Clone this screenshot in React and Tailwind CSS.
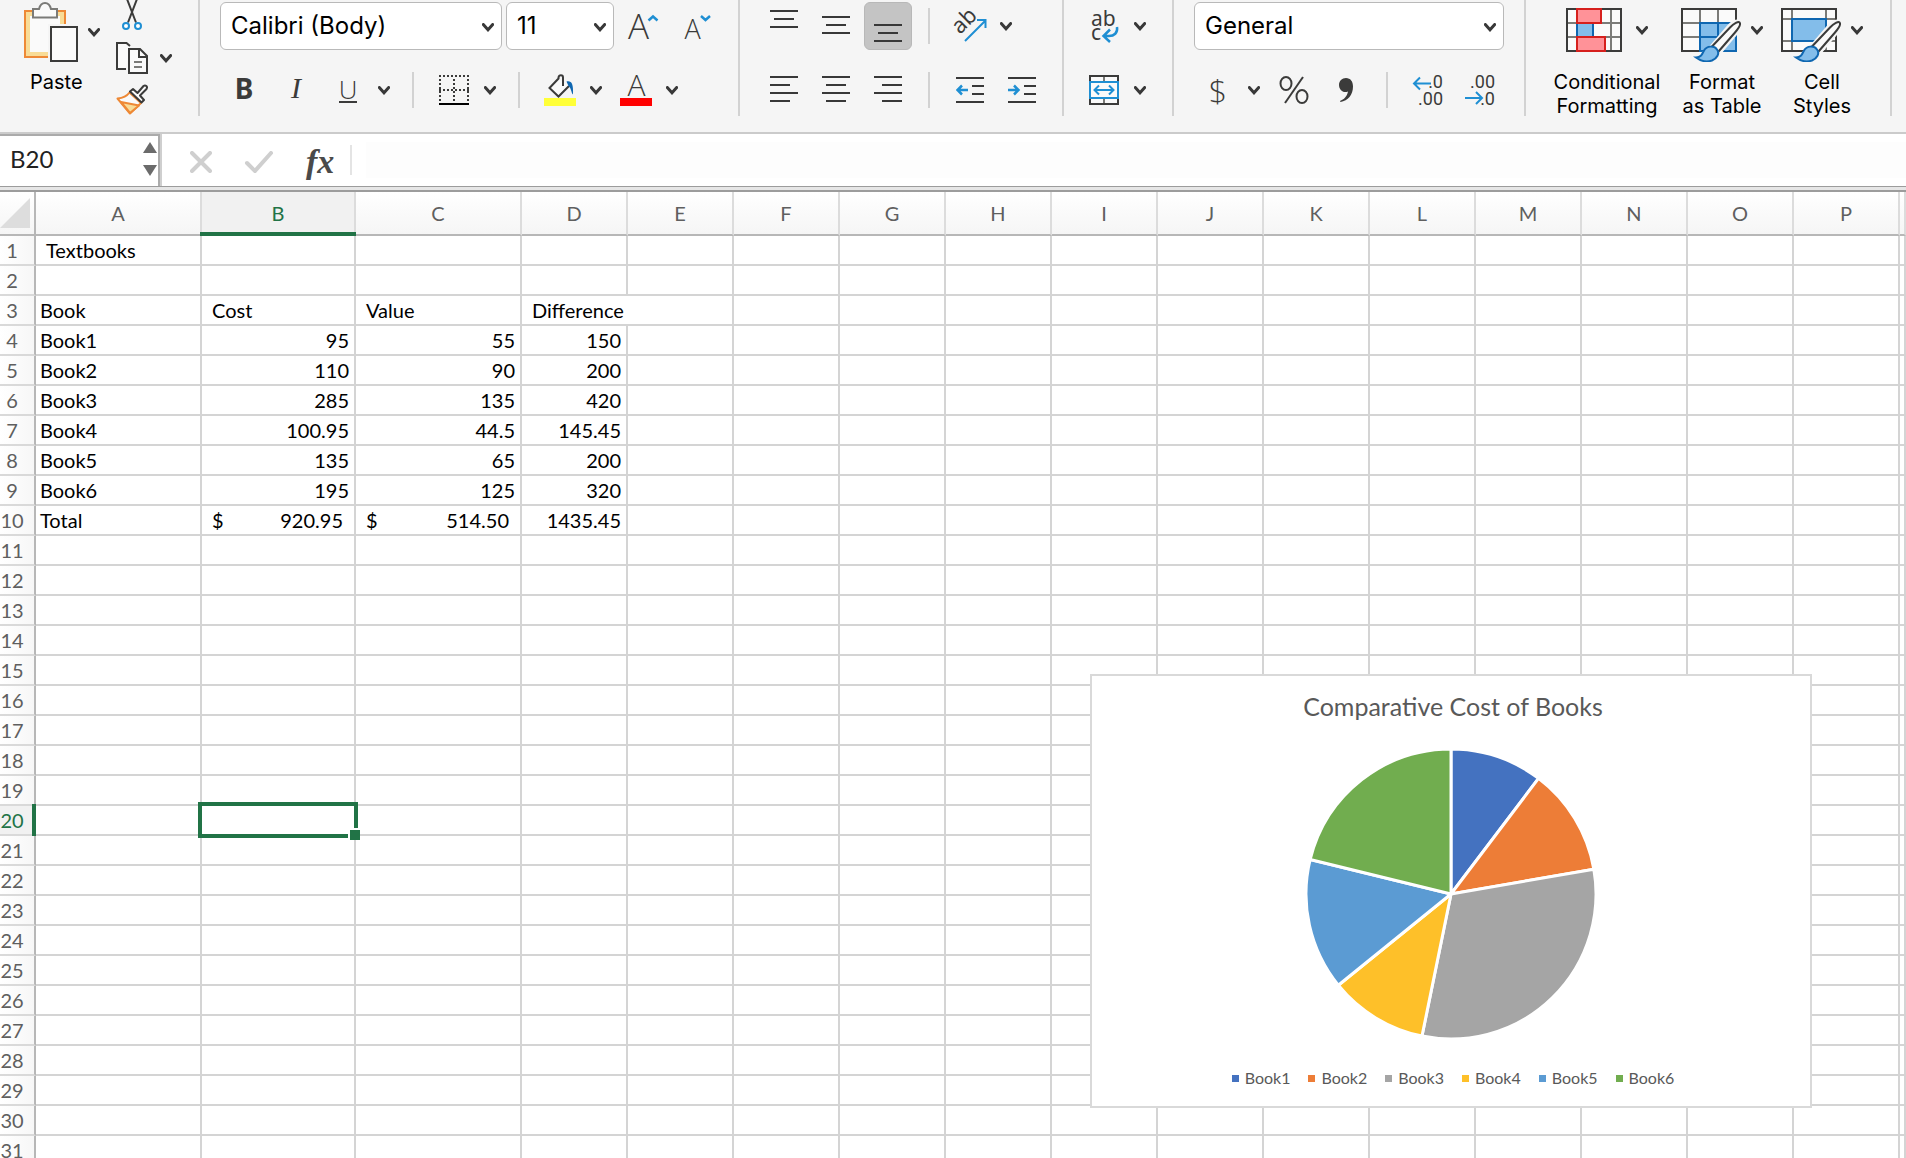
import React, { useState } from "react";

const COLUMNS = ["A", "B", "C", "D", "E", "F", "G", "H", "I", "J", "K", "L", "M", "N", "O", "P", ""];
const ROW_COUNT = 31;

const CELLS = {
    A1: { text: "Textbooks", className: "pl-2.5" },
    A3: { text: "Book" },
    B3: { text: "Cost", className: "pl-2.5" },
    C3: { text: "Value", className: "pl-2.5" },
    D3: { text: "Difference", className: "pl-2.5" },
    A4: { text: "Book1" }, B4: { text: "95" }, C4: { text: "55" }, D4: { text: "150" },
    A5: { text: "Book2" }, B5: { text: "110" }, C5: { text: "90" }, D5: { text: "200" },
    A6: { text: "Book3" }, B6: { text: "285" }, C6: { text: "135" }, D6: { text: "420" },
    A7: { text: "Book4" }, B7: { text: "100.95" }, C7: { text: "44.5" }, D7: { text: "145.45" },
    A8: { text: "Book5" }, B8: { text: "135" }, C8: { text: "65" }, D8: { text: "200" },
    A9: { text: "Book6" }, B9: { text: "195" }, C9: { text: "125" }, D9: { text: "320" },
    A10: { text: "Total" },
    B10: { text: "920.95", currency: true },
    C10: { text: "514.50", currency: true },
    D10: { text: "1435.45" },
};

const SLICES = [
    { name: "Book1", value: 95, fill: "#4472c0" },
    { name: "Book2", value: 110, fill: "#ed7d37" },
    { name: "Book3", value: 285, fill: "#a5a5a5" },
    { name: "Book4", value: 100.95, fill: "#fec029" },
    { name: "Book5", value: 135, fill: "#5b9bd3" },
    { name: "Book6", value: 195, fill: "#71ad4f" },
];

const Chevron = () => (
    <svg width="12" height="9" viewBox="0 0 12 9" fill="none" stroke="#383838" strokeWidth="3" aria-hidden="true">
        <path d="M1.3 1.5L6 6.8L10.7 1.5" strokeLinecap="round" />
    </svg>
);

const Divider = () => <div className="mx-4 h-9 w-0.5 bg-[#d2d2d2]" />;

const GroupDivider = () => <div className="h-[116px] w-0.5 shrink-0 bg-[#d2d2d2]" />;

const ToolButton = ({ label, pressed = false, children }) => (
    <button
        type="button"
        aria-label={label}
        aria-pressed={pressed}
        className={
            pressed
                ? "flex size-12 shrink-0 items-center justify-center rounded-md border border-[#b8b8b8] bg-[#c4c4c4]"
                : "flex size-12 shrink-0 items-center justify-center"
        }
    >
        {children}
    </button>
);

const MenuButton = ({ label }) => (
    <button type="button" aria-label={label} className="flex h-12 w-6 shrink-0 items-center justify-center">
        <Chevron />
    </button>
);

const SelectBox = ({ label, value, className }) => (
    <div className={`relative ${className}`}>
        <select
            aria-label={label}
            defaultValue={value}
            className="h-12 w-full appearance-none rounded-md border border-[#b9b9b9] bg-white pl-2.5 font-['Inter'] text-2xl leading-7 text-black"
        >
            <option>{value}</option>
        </select>
        <span className="pointer-events-none absolute inset-y-0 right-2 flex items-center pt-0.5">
            <Chevron />
        </span>
    </div>
);

// each line is [x1, x2, y] inside a 28px box
const Lines = ({ rows }) => (
    <svg width="28" height="34" viewBox="0 0 28 34" stroke="#383838" strokeWidth="2" aria-hidden="true">
        {rows.map(([x1, x2, y]) => (
            <line key={y} x1={x1} x2={x2} y1={y} y2={y} />
        ))}
    </svg>
);

const PasteIcon = () => (
    <svg width="54" height="60" viewBox="0 0 54 60" fill="none" strokeWidth="2" aria-hidden="true">
        <path d="M0 8h42v14h-16v34H0z" fill="#f8dc97" />
        <path d="M6 14h30v10H24v26H6z" fill="#fafafa" />
        <path d="M24 55H1V9h40v13" stroke="#ee8936" />
        <path d="M9 15.500V7h6c1-4 3-6 6-6s5 2 6 6h6v8.500z" fill="#fafafa" stroke="#7b7b78" />
        <rect x="24" y="22" width="30" height="38" fill="#f5f5f5" />
        <rect x="27" y="25" width="26" height="34" fill="#fafafa" stroke="#3b3b3a" />
    </svg>
);

const CutIcon = () => (
    <svg width="20" height="32" viewBox="0 0 20 32" fill="none" strokeWidth="2" aria-hidden="true">
        <path d="M5 -1L14 22.500M15 -1L6 22.500" stroke="#3b3b3a" />
        <circle cx="4" cy="26" r="3" fill="#fff" stroke="#1f8fd3" />
        <circle cx="16" cy="26" r="3" fill="#fff" stroke="#1f8fd3" />
    </svg>
);

const CopyIcon = () => (
    <svg width="32" height="32" viewBox="0 0 32 32" fill="none" stroke="#3b3b3a" strokeWidth="2" aria-hidden="true">
        <path d="M10 27H1V1h9.500l3.500 3" fill="#fafafa" />
        <path d="M13 7h11l7 7v17H13z" fill="#fafafa" />
        <path d="M23 7v8h8" />
        <path d="M18 20h8M18 25h8" stroke="#7b7b78" />
    </svg>
);

const BrushIcon = () => (
    <svg width="32" height="32" viewBox="0 0 32 32" fill="none" strokeWidth="2" strokeLinejoin="round" aria-hidden="true">
        <path d="M1.500 14.500C7 14 11 12 13.500 8.500L25 19L14 29.500z" fill="#fafafa" stroke="#ee8936" />
        <path d="M5 18L23 21.500L14 29z" fill="#f8dc97" stroke="#ee8936" />
        <path d="M14 7.500L17 5l4.500 4L27.500 2c2-1.500 4.500.5 3 3L24 11.500l4 4.500-2.500 2.500z" fill="#fafafa" stroke="#3b3b3a" />
    </svg>
);

const LetterIcon = ({ size, up }) => (
    <svg width="34" height="34" viewBox="0 0 34 34" fill="none" className="overflow-visible" aria-hidden="true">
        <text
            x={size === "large" ? 13.5 : 15.5}
            y="30"
            textAnchor="middle"
            fontFamily="Open Sans"
            fontSize={size === "large" ? 35 : 27}
            fill="#3b3b3a"
            fontWeight="300"
        >
            A
        </text>
        <path d={up ? "M23.500 11.500L28 7.500L32.500 11.500" : "M24 7L28.500 11L33 7"} stroke="#1f8fd3" strokeWidth="2.500" />
    </svg>
);

const BordersIcon = () => (
    <svg width="30" height="30" viewBox="0 0 30 30" fill="none" stroke="#3b3b3a" strokeWidth="2" aria-hidden="true">
        <path d="M0 1h30M0 15h30" strokeDasharray="2 2" />
        <path d="M1 4v24M15 4v24M29 4v24" strokeDasharray="2 2" />
        <path d="M0 29h30" stroke="#000" />
    </svg>
);

const FillIcon = () => (
    <svg width="32" height="32" viewBox="0 0 32 32" fill="none" strokeWidth="2" aria-hidden="true">
        <path d="M14 4.500L5.500 14L14.500 22.500L25 12.500z" fill="#fafafa" />
        <path d="M19 12V3.500c0-3-4-3-4.500 0v1L5.500 14l9 8.500L25 12" stroke="#3b3b3a" />
        <path d="M22.500 7.500c5-1 7 2 6.500 13c-2-2-1.500-6-4.500-8.500z" fill="#0f67b1" />
        <rect y="24" width="32" height="8" fill="#ffff38" />
    </svg>
);

const FontColorIcon = () => (
    <svg width="32" height="32" viewBox="0 0 32 32" fill="none" className="overflow-visible" aria-hidden="true">
        <text x="16.500" y="22" textAnchor="middle" fontFamily="Open Sans" fontSize="30" fontWeight="300" fill="#3b3b3a">
            A
        </text>
        <rect y="24" width="32" height="8" fill="#ff0000" />
    </svg>
);

const OrientationIcon = () => (
    <svg width="34" height="34" viewBox="0 0 34 34" fill="none" className="overflow-visible" aria-hidden="true">
        <text x="7" y="26" transform="rotate(-45 7 26)" fontFamily="Noto Sans" fontSize="22" fill="#3b3b3a">ab</text>
        <path d="M12 32L32 12M24 11h8.500v8" stroke="#1f8fd3" strokeWidth="2" />
    </svg>
);

const WrapIcon = () => (
    <svg width="30" height="34" viewBox="0 0 30 34" fill="none" className="overflow-visible" aria-hidden="true">
        <text x="2" y="17" fontFamily="Noto Sans" fontSize="21" fill="#3b3b3a">ab</text>
        <text x="2" y="31" fontFamily="Noto Sans" fontSize="21" fill="#3b3b3a">c</text>
        <path d="M28 18c1 6-3 9-8 9h-5M21 20.500L14.500 27L21 33" stroke="#1f8fd3" strokeWidth="2.500" />
    </svg>
);

const MergeIcon = () => (
    <svg width="30" height="30" viewBox="0 0 30 30" fill="none" strokeWidth="2" aria-hidden="true">
        <rect x="1" y="1" width="28" height="28" fill="#fafafa" stroke="#3b3b3a" />
        <path d="M15 2v26" stroke="#7b7b78" />
        <rect x="1" y="7" width="28" height="16" fill="#fafafa" stroke="#1f8fd3" />
        <path d="M5.500 15h19M10 10.500L5.500 15l4.500 4.500M20 10.500l4.500 4.500l-4.500 4.500" stroke="#1f8fd3" />
    </svg>
);

const IndentIcon = ({ outdent }) => (
    <svg width="28" height="26" viewBox="0 0 28 26" fill="none" strokeWidth="2" aria-hidden="true">
        <path d="M0 1h28M16 9h12M16 17h12M0 25h28" stroke="#383838" />
        <path
            d={outdent ? "M1 13h11M6 8.500L1.500 13L6 17.500" : "M0 13h11M6 8.500L10.500 13L6 17.500"}
            stroke="#1f8fd3"
            strokeWidth="2.500"
        />
    </svg>
);

const PercentIcon = () => (
    <svg width="30" height="28" viewBox="0 0 30 28" fill="none" stroke="#3b3b3a" strokeWidth="2" aria-hidden="true">
        <ellipse cx="7" cy="7.500" rx="5.500" ry="6.500" />
        <ellipse cx="23" cy="20.500" rx="5.500" ry="6.500" />
        <path d="M24 1L6 27" />
    </svg>
);

const CommaIcon = () => (
    <svg width="14" height="24" viewBox="0 0 14 24" aria-hidden="true">
        <path d="M7 0c4.500 0 7 3.500 7 8.500C14 17 9 22.500 1.500 24l-.5-1c4-1.500 7-4.500 8-9.500C4 15.500 0 11.500 0 7c0-4 3-7 7-7z" fill="#3b3b3a" />
    </svg>
);

const DecimalIcon = ({ increase }) => (
    <svg width="32" height="34" viewBox="0 0 32 34" fill="none" className="overflow-visible" aria-hidden="true">
        <text x="31" y="15" textAnchor="end" fontFamily="Roboto" fontSize="18" fill="#3b3b3a">
            {increase ? ".0" : ".00"}
        </text>
        <text x="31" y="32" textAnchor="end" fontFamily="Roboto" fontSize="18" fill="#3b3b3a">
            {increase ? ".00" : ".0"}
        </text>
        <path
            d={increase ? "M2 10.500h17M8 4.500L2 10.500l6 6" : "M1 25h17M12 19l6 6l-6 6"}
            stroke="#1f8fd3"
            strokeWidth="2"
        />
    </svg>
);

const ConditionalIcon = () => (
    <svg width="60" height="54" viewBox="0 0 60 54" fill="none" strokeWidth="2" aria-hidden="true">
        <rect x="1" y="1" width="54" height="42" fill="#fafafa" />
        <path d="M1 15h54M1 29h54M11 1v42M45 1v42" stroke="#7b7b78" />
        <rect x="1" y="1" width="54" height="42" stroke="#3b3b3a" />
        <rect x="27" y="16" width="17" height="12" fill="#fafafa" />
        <rect x="11" y="15" width="16" height="14" fill="#83bdea" stroke="#0f67b1" />
        <rect x="11" y="1" width="24" height="14" fill="#ff9298" stroke="#d6201d" />
        <rect x="11" y="29" width="28" height="14" fill="#ff9298" stroke="#d6201d" />
    </svg>
);

const PaintBrush = () => (
    <>
        <path d="M27 42L46 20c5-6 10-8 13-6c3 3-1 9-5 13L38 46c-3 8-13 10-24 4z" fill="#f5f5f5" stroke="#f5f5f5" strokeWidth="3" />
        <path d="M31 38.500L49 19.500c4-4 8.500-6.500 9.500-5c1.500 1.500-1 6-4.500 10L37.500 43.500" fill="#fafafa" stroke="#3b3b3a" />
        <path d="M15 49.500c5 0 6-3 8-7c3-5 10-5 13-1c3 4 0 9-5 11c-6 2-12 0-16-3z" fill="#83bdea" stroke="#0f67b1" />
    </>
);

const TableIcon = () => (
    <svg width="60" height="54" viewBox="0 0 60 54" fill="none" strokeWidth="2" aria-hidden="true">
        <rect x="1" y="1" width="54" height="42" fill="#fafafa" />
        <path d="M1 15h54M1 29h18M19 1v42M37 1v14" stroke="#7b7b78" />
        <rect x="1" y="1" width="54" height="42" stroke="#3b3b3a" />
        <path d="M19 15h36v28H19zM37 15v28M19 29h36" fill="#83bdea" stroke="#0f67b1" />
        <PaintBrush />
    </svg>
);

const StylesIcon = () => (
    <svg width="60" height="54" viewBox="0 0 60 54" fill="none" strokeWidth="2" aria-hidden="true">
        <rect x="1" y="1" width="54" height="42" fill="#fafafa" />
        <path d="M1 11h54M1 33h54M11 1v42M45 1v42" stroke="#7b7b78" />
        <rect x="1" y="1" width="54" height="42" stroke="#3b3b3a" />
        <rect x="11" y="11" width="34" height="22" fill="#83bdea" stroke="#0f67b1" />
        <PaintBrush />
    </svg>
);

const BigButton = ({ icon, lines, className }) => (
    <button type="button" className={`flex shrink-0 flex-col items-center gap-2 ${className}`}>
        <span className="flex items-start gap-2.5">
            {icon}
            <span className="pt-[18px]">
                <Chevron />
            </span>
        </span>
        <span className="flex flex-col font-['Inter'] text-[20px] leading-6 whitespace-nowrap text-black">
            {lines.map((line) => (
                <span key={line}>{line}</span>
            ))}
        </span>
    </button>
);

const Ribbon = () => (
    <div className="flex h-[134px] items-start border-b-2 border-[#cbcbcb] bg-[#f5f5f5]" role="toolbar" aria-label="Home">
        <div className="flex gap-4 pr-[26px] pl-6">
            <button type="button" className="flex flex-col items-start gap-2 pt-0.5">
                <span className="flex items-center gap-2.5">
                    <PasteIcon />
                    <Chevron />
                </span>
                <span className="pl-1.5 font-['Inter'] text-[20px] leading-6 text-black">Paste</span>
            </button>
            <div className="flex flex-col gap-2.5">
                <button type="button" aria-label="Cut" className="flex h-8 w-8 justify-center">
                    <CutIcon />
                </button>
                <div className="flex items-center gap-3">
                    <button type="button" aria-label="Copy" className="size-8">
                        <CopyIcon />
                    </button>
                    <button type="button" aria-label="Copy options">
                        <Chevron />
                    </button>
                </div>
                <button type="button" aria-label="Format painter" className="size-8">
                    <BrushIcon />
                </button>
            </div>
        </div>
        <GroupDivider />
        <div className="flex flex-col gap-4 px-5 pt-0.5">
            <div className="flex gap-1">
                <SelectBox label="Font" value="Calibri (Body)" className="w-[282px]" />
                <SelectBox label="Font size" value="11" className="w-[108px]" />
                <ToolButton label="Increase font size">
                    <LetterIcon size="large" up />
                </ToolButton>
                <ToolButton label="Decrease font size">
                    <LetterIcon size="small" />
                </ToolButton>
            </div>
            <div className="flex items-center font-['Noto_Sans'] text-[28px] leading-8 text-[#3b3b3a]">
                <div className="flex gap-1">
                    <ToolButton label="Bold">
                        <span className="pb-1 font-bold">B</span>
                    </ToolButton>
                    <ToolButton label="Italic">
                        <span className="pb-1 font-['Liberation_Serif'] text-[30px] italic">I</span>
                    </ToolButton>
                    <ToolButton label="Underline">
                        <span className="border-b-2 border-[#3b3b3a] font-['Open_Sans'] text-[26px] leading-6 font-light">U</span>
                    </ToolButton>
                </div>
                <MenuButton label="Underline options" />
                <Divider />
                <ToolButton label="Borders">
                    <BordersIcon />
                </ToolButton>
                <MenuButton label="Border options" />
                <Divider />
                <ToolButton label="Fill color">
                    <FillIcon />
                </ToolButton>
                <MenuButton label="Fill color options" />
                <div className="ml-1 flex">
                    <ToolButton label="Font color">
                        <FontColorIcon />
                    </ToolButton>
                    <MenuButton label="Font color options" />
                </div>
            </div>
        </div>
        <GroupDivider />
        <div className="flex flex-col gap-4 pt-0.5 pr-4 pl-5">
            <div className="flex items-center">
                <div className="flex gap-1">
                    <ToolButton label="Top align">
                        <Lines rows={[[0, 28, 2], [4, 24, 10], [0, 28, 18]]} />
                    </ToolButton>
                    <ToolButton label="Middle align">
                        <Lines rows={[[0, 28, 8], [4, 24, 16], [0, 28, 24]]} />
                    </ToolButton>
                    <ToolButton label="Bottom align" pressed>
                        <Lines rows={[[0, 28, 16], [4, 24, 24], [0, 28, 32]]} />
                    </ToolButton>
                </div>
                <Divider />
                <ToolButton label="Orientation">
                    <OrientationIcon />
                </ToolButton>
                <MenuButton label="Orientation options" />
            </div>
            <div className="flex items-center">
                <div className="flex gap-1">
                    <ToolButton label="Align left">
                        <Lines rows={[[0, 28, 4], [0, 20, 12], [0, 28, 20], [0, 20, 28]]} />
                    </ToolButton>
                    <ToolButton label="Center">
                        <Lines rows={[[0, 28, 4], [4, 24, 12], [0, 28, 20], [4, 24, 28]]} />
                    </ToolButton>
                    <ToolButton label="Align right">
                        <Lines rows={[[0, 28, 4], [8, 28, 12], [0, 28, 20], [8, 28, 28]]} />
                    </ToolButton>
                </div>
                <Divider />
                <div className="flex gap-1">
                    <ToolButton label="Decrease indent">
                        <IndentIcon outdent />
                    </ToolButton>
                    <ToolButton label="Increase indent">
                        <IndentIcon />
                    </ToolButton>
                </div>
            </div>
        </div>
        <GroupDivider />
        <div className="flex flex-col gap-4 pt-0.5 pr-5 pl-4">
            <div className="flex">
                <ToolButton label="Wrap text">
                    <WrapIcon />
                </ToolButton>
                <MenuButton label="Wrap text options" />
            </div>
            <div className="flex">
                <ToolButton label="Merge and center">
                    <MergeIcon />
                </ToolButton>
                <MenuButton label="Merge options" />
            </div>
        </div>
        <GroupDivider />
        <div className="flex flex-col gap-4 px-5 pt-0.5">
            <SelectBox label="Number format" value="General" className="w-full" />
            <div className="flex items-center">
                <ToolButton label="Accounting format">
                    <span className="font-['Open_Sans'] text-[32px] leading-8 font-light text-[#3b3b3a]">$</span>
                </ToolButton>
                <MenuButton label="Currency options" />
                <div className="ml-1 flex gap-1">
                    <ToolButton label="Percent style">
                        <PercentIcon />
                    </ToolButton>
                    <ToolButton label="Comma style">
                        <CommaIcon />
                    </ToolButton>
                </div>
                <Divider />
                <div className="flex gap-1">
                    <ToolButton label="Increase decimal">
                        <DecimalIcon increase />
                    </ToolButton>
                    <ToolButton label="Decrease decimal">
                        <DecimalIcon />
                    </ToolButton>
                </div>
            </div>
        </div>
        <GroupDivider />
        <div className="flex gap-4 pt-2 pr-[26px] pl-6">
            <BigButton icon={<ConditionalIcon />} lines={["Conditional", "Formatting"]} className="w-[114px]" />
            <BigButton icon={<TableIcon />} lines={["Format", "as Table"]} className="w-[84px]" />
            <BigButton icon={<StylesIcon />} lines={["Cell", "Styles"]} className="w-[84px]" />
        </div>
        <GroupDivider />
    </div>
);

const FormulaBar = () => {
    const [formula, setFormula] = useState("");

    return (
        <div className="flex h-[52px] items-stretch bg-white">
            <div className="flex w-[162px] shrink-0 border-r-2 border-[#cfcfcf]">
                <div className="flex w-full items-center border-t-2 border-r-2 border-[#ababab] pb-1">
                    <input
                        aria-label="Name box"
                        defaultValue="B20"
                        className="w-0 flex-1 pl-2.5 text-2xl text-[#222] outline-none"
                    />
                    <div className="flex flex-col gap-3 pr-px">
                        <button type="button" aria-label="Previous name">
                            <svg width="14" height="11" viewBox="0 0 14 11" fill="#6b6b6b">
                                <path d="M7 0l7 11H0z" />
                            </svg>
                        </button>
                        <button type="button" aria-label="Next name">
                            <svg width="14" height="11" viewBox="0 0 14 11" fill="#6b6b6b">
                                <path d="M7 11l7-11H0z" />
                            </svg>
                        </button>
                    </div>
                </div>
            </div>
            <div className="flex items-center pt-1 pl-7">
                <button type="button" aria-label="Cancel">
                    <svg width="22" height="22" viewBox="0 0 22 22" stroke="#cfcfcf" strokeWidth="4" strokeLinecap="round">
                        <path d="M2 2l18 18M20 2L2 20" />
                    </svg>
                </button>
                <button type="button" aria-label="Enter" className="ml-8">
                    <svg width="30" height="22" viewBox="0 0 30 22" fill="none" stroke="#cfcfcf" strokeWidth="4" strokeLinecap="round">
                        <path d="M3 12l8 8L27 2" />
                    </svg>
                </button>
                <button
                    type="button"
                    aria-label="Insert function"
                    className="ml-8 font-['Liberation_Serif'] text-[34px] leading-9 font-bold text-[#4a4a4a] italic"
                >
                    fx
                </button>
            </div>
            <div className="ml-4 h-[30px] w-0.5 self-center bg-[#e4e4e4]" />
            <input
                aria-label="Formula"
                value={formula}
                onChange={(e) => setFormula(e.target.value)}
                className="my-2 ml-3.5 flex-1 bg-[#fdfdfd] px-2 text-xl outline-none"
            />
        </div>
    );
};

const Selection = () => (
    <div className="pointer-events-none absolute -top-1 -right-1 -bottom-1 -left-1 z-10 border-4 border-[#217346]">
        <div className="absolute -right-1.5 -bottom-1.5 size-3 border-t-2 border-l-2 border-white bg-[#217346]" />
    </div>
);

const Cell = ({ id, column, row }) => {
    const cell = CELLS[id];
    const numeric = cell && /^\d/.test(cell.text);
    const borders = id === "D3" ? "border-b-2" : "border-r-2 border-b-2";

    if (column === "B" && row === 20) {
        return (
            <td className="relative h-[30px] border-r-2 border-b-2 border-[#d4d4d4] p-0">
                <Selection />
            </td>
        );
    }
    if (!cell) return <td className={`h-[30px] border-[#d4d4d4] p-0 ${borders}`} />;
    if (cell.currency) {
        return (
            <td className={`h-[30px] border-[#d4d4d4] p-0 pr-[11px] pl-2.5 ${borders}`}>
                <div className="flex justify-between">
                    <span>$</span>
                    <span>{cell.text}</span>
                </div>
            </td>
        );
    }
    return (
        <td
            className={`h-[30px] border-[#d4d4d4] py-0 pr-[5px] whitespace-nowrap ${borders} ${numeric ? "text-right" : "text-left"} ${cell.className || "pl-1"}`}
        >
            {cell.text}
        </td>
    );
};

const Sheet = () => (
    <table className="w-full table-fixed border-separate border-spacing-0 text-[20px] leading-7 text-black">
        <colgroup>
            <col className="w-9" />
            <col className="w-[166px]" />
            <col className="w-[154px]" />
            <col className="w-[166px]" />
            {COLUMNS.slice(3, -1).map((name) => (
                <col key={name} className="w-[106px]" />
            ))}
            <col />
        </colgroup>
        <thead>
            <tr className="bg-linear-to-b from-white to-[#f5f5f5]">
                <th className="h-11 border-r-2 border-b-2 border-[#b7b7b7] p-0">
                    <svg width="30" height="30" viewBox="0 0 30 30" fill="#dddddd" aria-hidden="true">
                        <path d="M30 0v30H0z" />
                    </svg>
                </th>
                {COLUMNS.map((name) => (
                    <th
                        key={name}
                        scope="col"
                        className={
                            name === "B"
                                ? "relative border-r-2 border-b-2 border-r-[#dcdcdc] border-b-[#b7b7b7] bg-[#f1f1f1] p-0 font-normal text-[#217346]"
                                : "border-r-2 border-b-2 border-r-[#dcdcdc] border-b-[#b7b7b7] p-0 font-normal text-[#5f5f5f]"
                        }
                    >
                        {name}
                        {name === "B" && <span className="absolute -right-0.5 -bottom-0.5 -left-0.5 h-1 bg-[#217346]" />}
                    </th>
                ))}
            </tr>
        </thead>
        <tbody>
            {Array.from({ length: ROW_COUNT }, (_, i) => i + 1).map((row) => (
                <tr key={row}>
                    <th
                        scope="row"
                        className={
                            row === 20
                                ? "relative border-r-2 border-b-2 border-r-[#b7b7b7] border-b-[#d9d9d9] bg-[#f1f1f1] p-0 pr-2.5 font-normal text-[#217346]"
                                : "border-r-2 border-b-2 border-r-[#b7b7b7] border-b-[#d9d9d9] bg-linear-to-r from-white to-[#f7f7f7] p-0 pr-2.5 font-normal text-[#5f5f5f]"
                        }
                    >
                        {row}
                        {row === 20 && <span className="absolute -top-0.5 -right-0.5 -bottom-0.5 w-1 bg-[#217346]" />}
                    </th>
                    {COLUMNS.map((column) => (
                        <Cell key={column} id={column + row} column={column} row={row} />
                    ))}
                </tr>
            ))}
        </tbody>
    </table>
);

const PieChart = () => {
    const total = SLICES.reduce((sum, s) => sum + s.value, 0);
    const point = (share) => {
        const angle = share * 2 * Math.PI;
        return `${146 + 145 * Math.sin(angle)} ${146 - 145 * Math.cos(angle)}`;
    };
    let start = 0;

    return (
        <svg width="292" height="292" viewBox="0 0 292 292" role="img" aria-label="Comparative Cost of Books">
            {SLICES.map((slice) => {
                const end = start + slice.value / total;
                const d = `M146 146L${point(start)}A145 145 0 0 1 ${point(end)}z`;
                start = end;
                return <path key={slice.name} d={d} fill={slice.fill} stroke="#fff" strokeWidth="3" strokeLinejoin="round" />;
            })}
        </svg>
    );
};

const Chart = () => (
    <figure className="absolute top-[482px] left-[1090px] z-10 flex w-[722px] flex-col items-center border-2 border-[#d9d9d9] bg-white pt-3.5 pb-4 text-[#595959]">
        <figcaption className="pl-1 text-[25px] leading-8">Comparative Cost of Books</figcaption>
        <div className="py-[26px]">
            <PieChart />
        </div>
        <ul className="flex gap-[18px] pl-1 text-base leading-6">
            {SLICES.map((slice) => (
                <li key={slice.name} className="flex items-center gap-1.5">
                    <span className="size-[7px]" style={{ backgroundColor: slice.fill }} />
                    {slice.name}
                </li>
            ))}
        </ul>
    </figure>
);

const App = () => {
    return (
        <div className="flex h-screen flex-col overflow-hidden bg-white font-['Lato',sans-serif]">
            <div className="shrink-0">
                <Ribbon />
                <FormulaBar />
                <div className="h-1.5 border-t border-b-2 border-t-[#9c9c9c] border-b-[#9c9c9c] bg-[#e6e6e6]" />
            </div>
            <div className="relative flex-1 overflow-hidden">
                <Sheet />
                <Chart />
            </div>
        </div>
    );
};

export default App;
